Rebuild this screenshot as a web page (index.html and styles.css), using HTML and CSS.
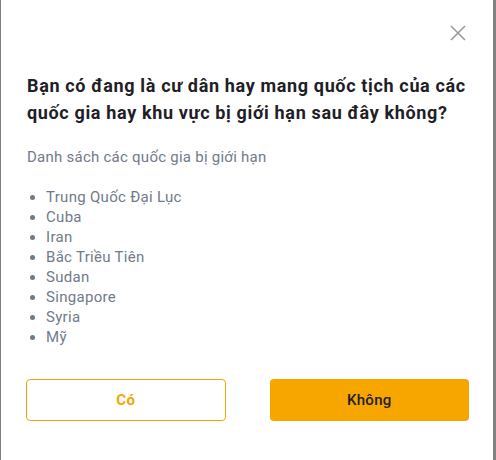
FILE: index.html
```html
<!DOCTYPE html>
<html lang="vi">
<head>
<meta charset="utf-8">
<link rel="stylesheet" href="styles.css">
</head>
<body>
<div class="overlay">
  <div class="modal">
    <div class="modal-head">
      <button class="close" aria-label="Đóng">
        <svg width="16" height="16" viewBox="0 0 16 16"><path d="M1 1L15 15M15 1L1 15" stroke="#9a9a9a" stroke-width="1.6" fill="none"/></svg>
      </button>
    </div>
    <h2 class="title">Bạn có đang là cư dân hay mang quốc tịch của các quốc gia hay khu vực bị giới hạn sau đây không?</h2>
    <p class="subtitle">Danh sách các quốc gia bị giới hạn</p>
    <ul class="countries">
      <li>Trung Quốc Đại Lục</li>
      <li>Cuba</li>
      <li>Iran</li>
      <li>Bắc Triều Tiên</li>
      <li>Sudan</li>
      <li>Singapore</li>
      <li>Syria</li>
      <li>Mỹ</li>
    </ul>
    <div class="actions">
      <button class="btn btn-outline">Có</button>
      <button class="btn btn-solid">Không</button>
    </div>
  </div>
  <div class="side"></div>
</div>
</body>
</html>
```
FILE: styles.css
```css
html, body {
  margin: 0;
  padding: 0;
}
body {
  background: #808080;
  font-family: Roboto, "Noto Sans", sans-serif;
  width: 496px;
  height: 460px;
  overflow: hidden;
}
.overlay {
  display: flex;
  height: 460px;
}
.modal {
  margin-left: 1px;
  width: 492px;
  height: 460px;
  background: #fff;
  box-sizing: border-box;
  padding: 25px 24px 0 25px;
}
.modal-head {
  display: flex;
  justify-content: flex-end;
  height: 16px;
  padding-right: 3px;
}
.close {
  border: 0;
  background: none;
  padding: 0;
  width: 16px;
  height: 16px;
  display: block;
  cursor: pointer;
}
.close svg { display: block; }
.title {
  margin: 31px 0 0 1px;
  font-size: 18px;
  line-height: 27px;
  font-weight: 700;
  color: #1e2026;
  letter-spacing: 0.65px;
}
.subtitle {
  margin: 21px 0 0 1px;
  font-size: 15px;
  line-height: 20px;
  color: #707a8a;
  letter-spacing: 0.25px;
}
.countries {
  margin: 20px 0 0 0;
  padding-left: 20px;
  font-size: 15px;
  line-height: 20px;
  color: #707a8a;
  letter-spacing: 0.3px;
}
.actions {
  display: flex;
  gap: 44px;
  margin-top: 32px;
}
.btn {
  width: 200px;
  height: 42px;
  border-radius: 4px;
  font-family: inherit;
  font-size: 15px;
  font-weight: 700;
  box-sizing: border-box;
  letter-spacing: 0.3px;
}
.btn-outline {
  background: #fff;
  border: 1px solid #f7a600;
  color: #f7a600;
}
.btn-solid {
  background: #f7a600;
  border: 0;
  color: #1e2026;
  font-weight: 500;
}
.side {
  flex: 1;
}
```
